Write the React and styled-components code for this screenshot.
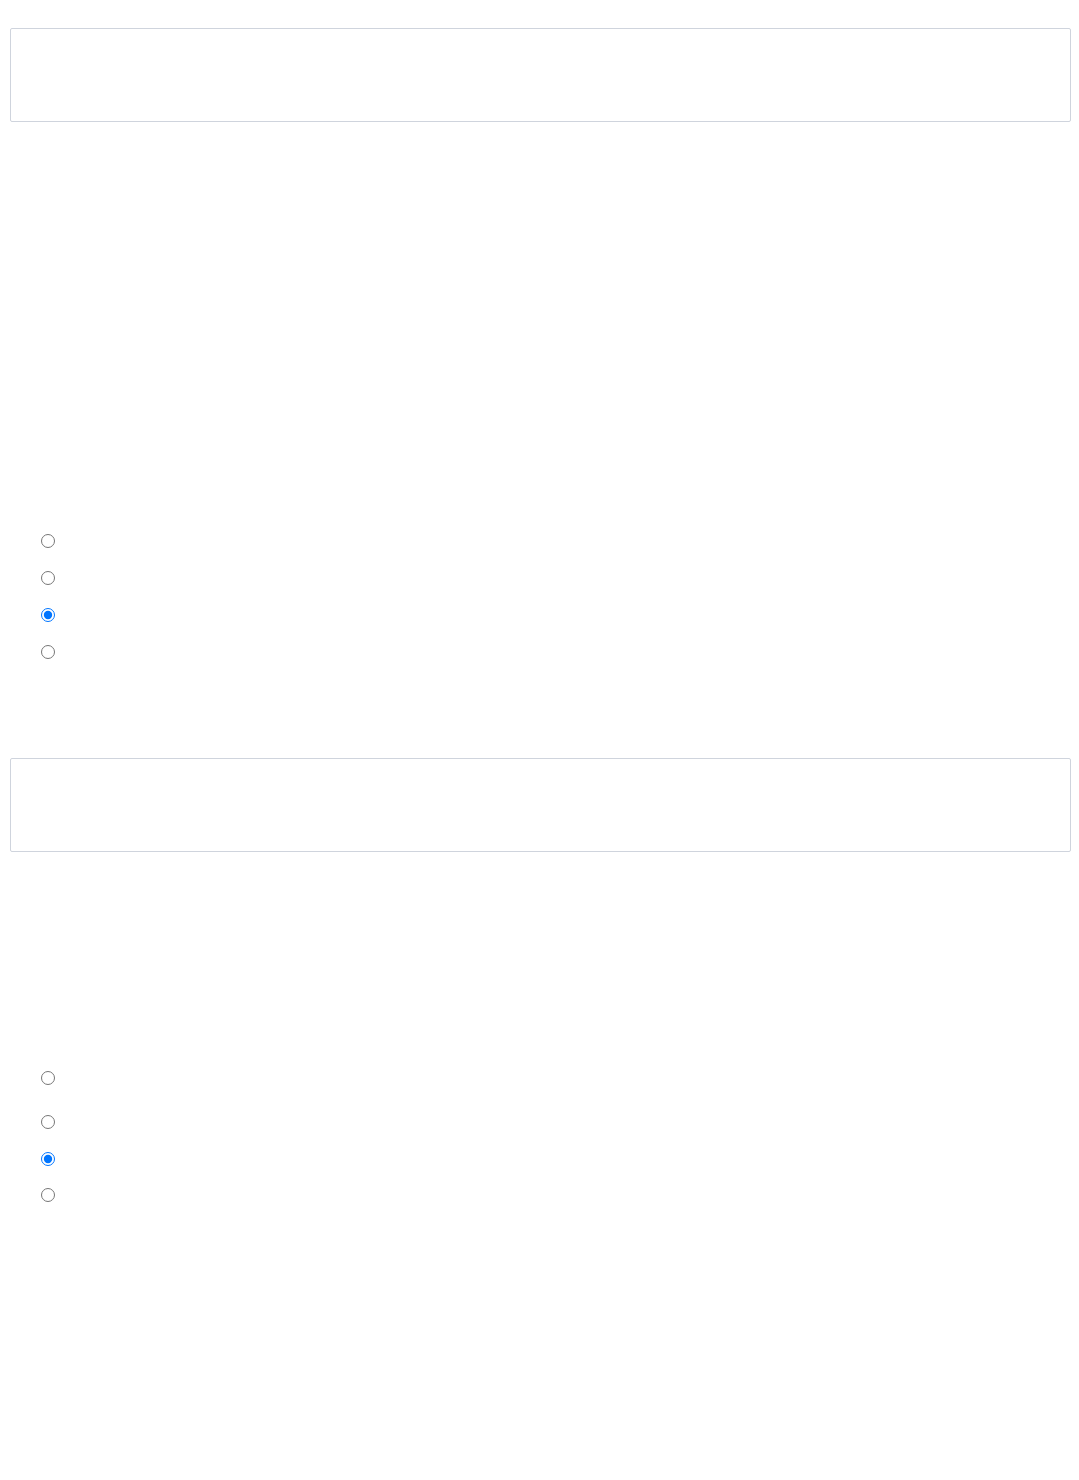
import styled, { createGlobalStyle } from 'styled-components';

const GlobalStyle = createGlobalStyle`
  html, body {
    margin: 0;
    padding: 0;
    background: #ffffff;
    font-family: "Liberation Sans", Arial, sans-serif;
  }
`;

const Page = styled.main`
  display: flex;
  flex-direction: column;
  padding: 28px 8px 0 10px;
  min-height: 1480px;
  box-sizing: border-box;
`;

const AnswerBox = styled.div`
  height: 94px;
  box-sizing: border-box;
  border: 1px solid #cfd4dd;
  border-radius: 2px;
  background: #ffffff;
`;

const ChoiceList = styled.fieldset`
  display: flex;
  flex-direction: column;
  margin: ${(p) => p.$top}px 0 0 0;
  padding: 0 0 0 31px;
  border: 0;
`;

const ChoiceRow = styled.label`
  display: flex;
  align-items: flex-start;
  height: ${(p) => p.$h}px;
`;

const Radio = styled.input.attrs({ type: 'radio' })`
  width: 14px;
  height: 14px;
  margin: 0;
`;

const Gap = styled.div`
  height: ${(p) => p.$h}px;
`;

const groups = [
  { name: 'q1', top: 412, rows: [37, 37, 37, 37], checked: 2 },
  { name: 'q2', top: 219, rows: [44, 37, 36, 37], checked: 2 },
];

function Choices({ group }) {
  return (
    <ChoiceList $top={group.top}>
      {group.rows.map((h, i) => (
        <ChoiceRow key={i} $h={h}>
          <Radio name={group.name} defaultChecked={i === group.checked} />
        </ChoiceRow>
      ))}
    </ChoiceList>
  );
}

export default function App() {
  return (
    <>
      <GlobalStyle />
      <Page>
        <AnswerBox />
        <Choices group={groups[0]} />
        <Gap $h={76} />
        <AnswerBox />
        <Choices group={groups[1]} />
      </Page>
    </>
  );
}
